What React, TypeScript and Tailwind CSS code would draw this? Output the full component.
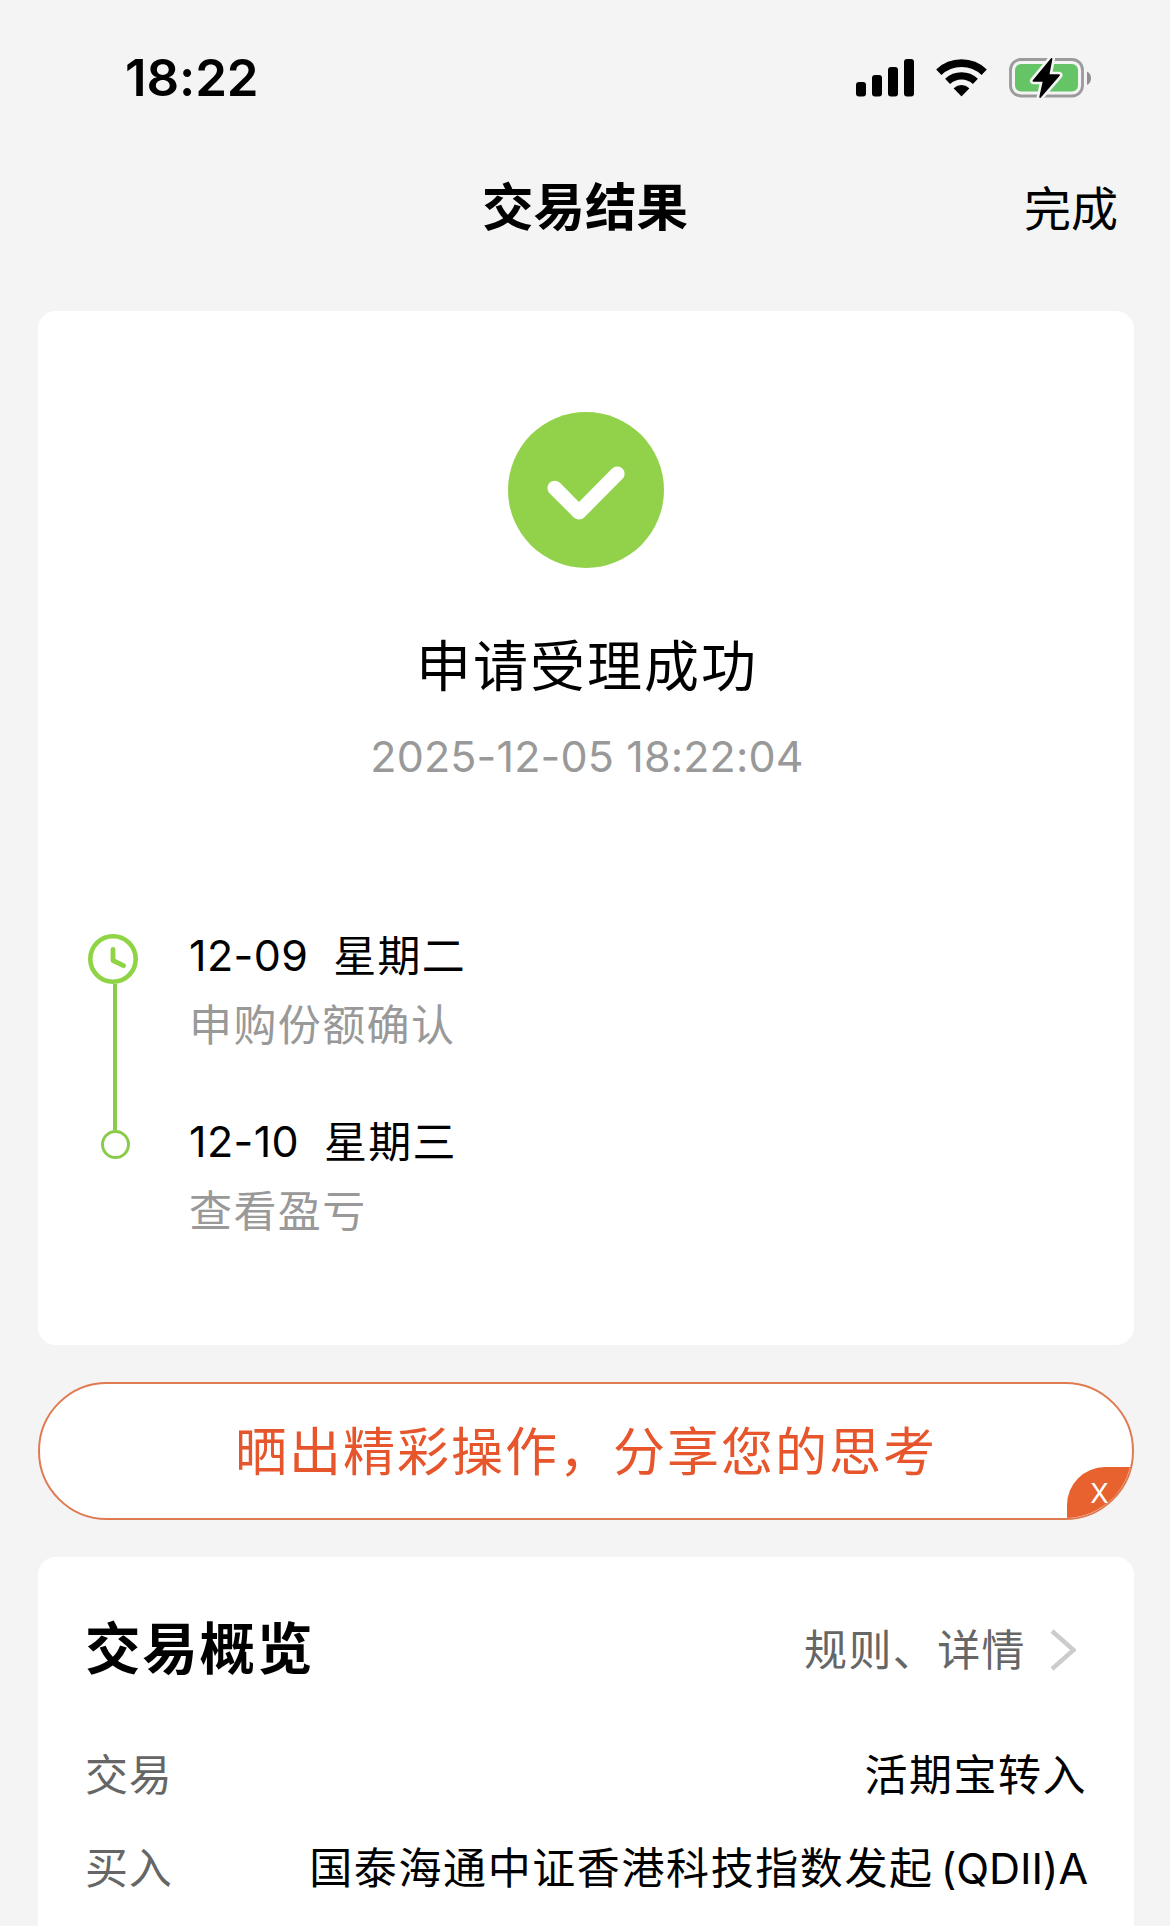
import { clsx } from "clsx";

type Step = {
  date: string;
  weekday: string;
  label: string;
};

const steps: Step[] = [
  { date: "12-09", weekday: "星期二", label: "申购份额确认" },
  { date: "12-10", weekday: "星期三", label: "查看盈亏" },
];

function SignalIcon() {
  return (
    <svg viewBox="0 0 58 38" className="h-[38px] w-[58px]" fill="#000">
      <rect x="0" y="23" width="10" height="14.5" rx="3" />
      <rect x="16" y="16" width="10" height="21.5" rx="3" />
      <rect x="32" y="8" width="10" height="29.5" rx="3" />
      <rect x="48" y="0" width="10" height="37.5" rx="3" />
    </svg>
  );
}

function WifiIcon() {
  return (
    <svg viewBox="0 0 51 38" className="h-[38px] w-[51px]" fill="none" stroke="#000">
      <path d="M2.8 13.2A33 33 0 0 1 48.2 13.2" strokeWidth="7.6" />
      <path d="M11.6 22.4A20.3 20.3 0 0 1 39.4 22.4" strokeWidth="7.2" />
      <path d="M25.5 36.6L18.4 29.4A10.6 10.6 0 0 1 32.6 29.4Z" fill="#000" strokeWidth="1.2" strokeLinejoin="round" />
    </svg>
  );
}

function BatteryIcon() {
  const bolt = "M42.5 1L24.5 22.8H34.8L31.2 39L50 17.2H39.4Z";
  return (
    <svg viewBox="0 0 82 40" className="h-10 w-[82px]" fill="none">
      <rect x="1.5" y="1.5" width="72" height="36.5" rx="10.5" stroke="#9b9b9d" strokeWidth="2.8" />
      <path d="M78 13.5C80.8 14.8 82 17.4 82 20.2S80.8 25.6 78 27Z" fill="#8f8f91" />
      <rect x="6" y="6" width="63" height="27.5" rx="6" fill="#65c466" />
      <path d={bolt} fill="#f4f4f4" stroke="#f4f4f4" strokeWidth="7" strokeLinejoin="round" />
      <path d={bolt} fill="#000" stroke="#000" strokeWidth="1.8" strokeLinejoin="round" />
    </svg>
  );
}

function StatusBar() {
  return (
    <div className="flex h-[155px] items-center justify-between pr-[79px] pl-[125px]">
      <span className="text-[51px] leading-none font-semibold tracking-[-0.1px]">18:22</span>
      <div className="flex items-center gap-[22px]">
        <SignalIcon />
        <WifiIcon />
        <BatteryIcon />
      </div>
    </div>
  );
}

function TitleBar() {
  return (
    <div className="grid h-[156px] grid-cols-3 items-start px-[52px]">
      <h1 className="col-start-2 pt-[22px] text-center text-[51.5px] leading-[60px] font-bold">交易结果</h1>
      <button className="cursor-pointer pt-[24px] text-right text-[47px] leading-[60px]">完成</button>
    </div>
  );
}

function ResultCard() {
  return (
    <section className="flex h-[1034px] flex-col rounded-[18px] bg-white pt-[101px]">
      <svg viewBox="0 0 156 156" className="size-[156px] self-center" fill="none">
        <circle cx="78" cy="78" r="78" fill="#92d24a" />
        <path d="M46.7 76L71 100.3L109.3 61.7" stroke="#fff" strokeWidth="14.6" strokeLinecap="round" strokeLinejoin="round" />
      </svg>
      <h2 className="mt-[68px] pl-[2px] text-center text-[55px] leading-[60px] tracking-[2px]">申请受理成功</h2>
      <p className="mt-[30px] pl-[2px] text-center text-[43px] leading-[60px] tracking-[0.15px] text-[#999]">
        2025-12-05 18:22:04
      </p>

      <div className="mt-[135px] flex pl-[50px]">
        <div className="flex w-[101px] flex-col pt-[13px]">
          <svg viewBox="0 0 50 50" className="size-[50px]" fill="none" stroke="#8fd444">
            <circle cx="25" cy="25" r="22.7" strokeWidth="4.6" />
            <path d="M25 15.5V26.5L35.5 31.7" strokeWidth="4.8" strokeLinecap="round" strokeLinejoin="round" />
          </svg>
          <div className="ml-[25px] h-[146px] w-1 bg-[#8bcb4c]" />
          <div className="ml-[13px] size-[29px] rounded-full border-[3px] border-[#8bcb4c]" />
        </div>
        <ul>
          {steps.map((step, i) => (
            <li key={step.date} className={clsx(i > 0 && "mt-[47px]")}>
              <div className="flex gap-[25px] text-[43px] leading-[68px]">
                <span className="tracking-[0.4px]">{step.date}</span>
                <span className="pt-px tracking-[1.2px]">{step.weekday}</span>
              </div>
              <div className="pt-px text-[43px] leading-[69px] tracking-[1.4px] text-[#999]">{step.label}</div>
            </li>
          ))}
        </ul>
      </div>
    </section>
  );
}

function ShareBanner() {
  return (
    <div className="relative mt-[37px] flex h-[138px] items-center justify-center overflow-hidden rounded-full border-2 border-[#e07a50] bg-white">
      <span className="pt-[4px] text-[52px] leading-none tracking-[2px] text-[#e6552b]">晒出精彩操作，分享您的思考</span>
      <button className="absolute right-0 bottom-0 h-[51px] w-[65px] cursor-pointer rounded-tl-[38px] bg-[#e8622f] pt-px text-center text-[27px] leading-[51px] text-white">
        X
      </button>
    </div>
  );
}

function OverviewCard() {
  return (
    <section className="mt-[37px] h-[369px] rounded-t-[18px] bg-white pr-[46px] pl-[47px]">
      <div className="flex h-[183px] items-center justify-between">
        <h2 className="text-[55.5px] leading-none font-bold tracking-[1.8px]">交易概览</h2>
        <div className="flex items-center gap-[24px] pt-[2px] pr-[12px] text-[43px] leading-none text-[#666]">
          <span className="pt-px tracking-[1.4px]">规则、详情</span>
          <svg viewBox="0 0 26 42" className="h-[42px] w-[26px]" fill="none" stroke="#ccc" strokeWidth="4.4">
            <path d="M2 2L23.5 21L2 40" />
          </svg>
        </div>
      </div>
      <div className="flex h-[70px] items-center justify-between text-[43px] leading-none">
        <span className="tracking-[0.8px] text-[#666]">交易</span>
        <span className="pr-px tracking-[1.5px]">活期宝转入</span>
      </div>
      <div className="mt-[23px] flex h-[70px] items-center justify-between text-[43px] leading-none">
        <span className="tracking-[0.8px] text-[#666]">买入</span>
        <span className="flex gap-[7px]">
          <span className="tracking-[1.6px]">国泰海通中证香港科技指数发起</span>
          <span className="tracking-[-0.1px]">(QDII)A</span>
        </span>
      </div>
    </section>
  );
}

export default function App() {
  return (
    <div className="h-[1926px] w-[1170px] overflow-hidden bg-[#f4f4f4] font-['Inter','Noto_Sans_CJK_SC',sans-serif] text-black">
      <StatusBar />
      <TitleBar />
      <main className="pr-[36px] pl-[38px]">
        <ResultCard />
        <ShareBanner />
        <OverviewCard />
      </main>
    </div>
  );
}
